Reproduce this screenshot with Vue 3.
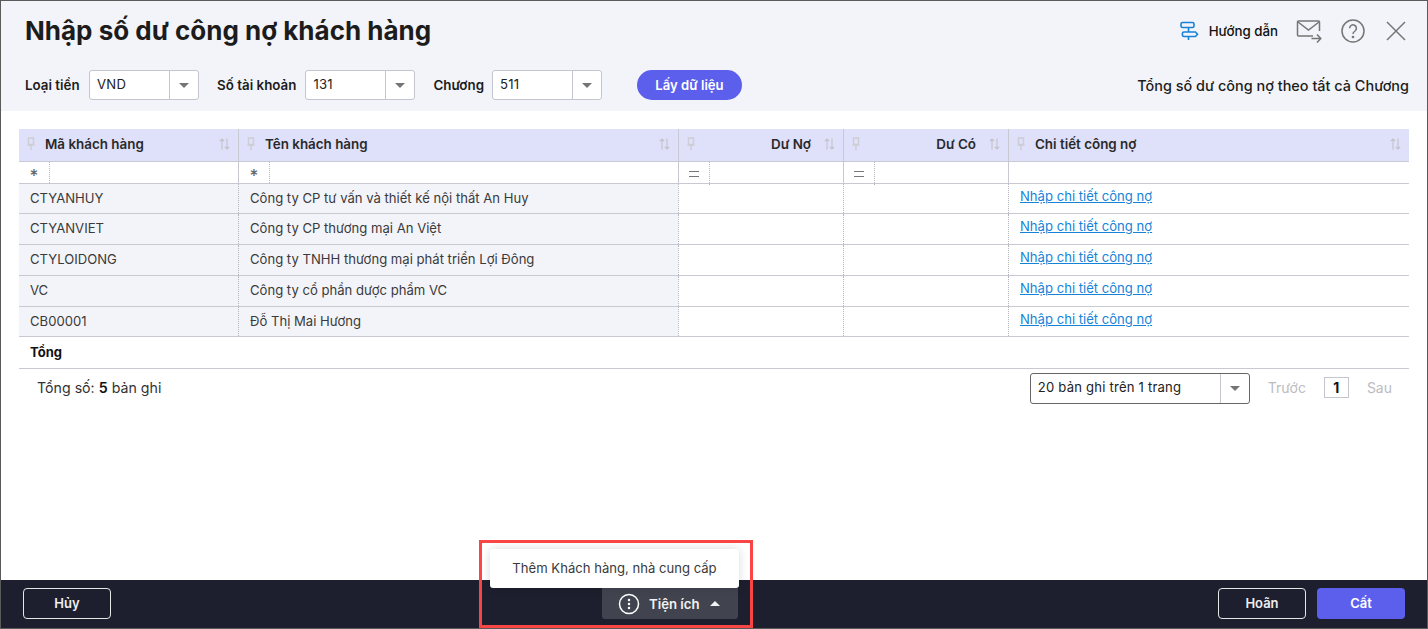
<script setup>
import { ref } from "vue";

const columns = ref([
  { key: "code", label: "Mã khách hàng", op: "*" },
  { key: "name", label: "Tên khách hàng", op: "*" },
  { key: "debit", label: "Dư Nợ", op: "=", right: true },
  { key: "credit", label: "Dư Có", op: "=", right: true },
  { key: "detail", label: "Chi tiết công nợ", op: "" },
]);

const rows = ref([
  { code: "CTYANHUY", name: "Công ty CP tư vấn và thiết kế nội thất An Huy", h: 30 },
  { code: "CTYANVIET", name: "Công ty CP thương mại An Việt", h: 31 },
  { code: "CTYLOIDONG", name: "Công ty TNHH thương mại phát triển Lợi Đông", h: 31 },
  { code: "VC", name: "Công ty cổ phần dược phẩm VC", h: 31 },
  { code: "CB00001", name: "Đỗ Thị Mai Hương", h: 30 },
]);

const filters = ref([
  { label: "Loại tiền", value: "VND" },
  { label: "Số tài khoản", value: "131" },
  { label: "Chương", value: "511" },
]);
</script>

<template>
  <div class="page">
    <header class="head">
      <div class="title-row">
        <h1>Nhập số dư công nợ khách hàng</h1>
        <div class="tools">
          <svg class="guide-icon" width="20" height="20" viewBox="0 0 20 20" fill="none" stroke="#1683d8" stroke-width="1.6">
            <rect x="2" y="1.5" width="13" height="5" rx="1.6" />
            <path d="M5 11h11.5l2 2.2-2 2.3H5a1.6 1.6 0 0 1-1.6-1.6v-1.3A1.6 1.6 0 0 1 5 11z" />
            <path d="M9.5 6.5V11M9.5 15.5V19" />
          </svg>
          <span class="guide">Hướng dẫn</span>
          <svg width="26" height="24" viewBox="0 0 26 24" fill="none" stroke="#757575" stroke-width="1.5">
            <path d="M17 17H2.5a1 1 0 0 1-1-1V3a1 1 0 0 1 1-1h20a1 1 0 0 1 1 1v9" />
            <path d="M2 3l10.5 8L23 3" />
            <path d="M15.5 19.5h9M21 15.5l3.8 4-3.8 4" />
          </svg>
          <svg width="24" height="24" viewBox="0 0 24 24" fill="none" stroke="#757575" stroke-width="1.5">
            <circle cx="12" cy="12" r="11" />
            <path d="M8.6 9.2a3.4 3.4 0 1 1 5.4 2.8c-1.3.9-2 1.5-2 3" />
            <circle cx="12" cy="18" r=".6" fill="#757575" />
          </svg>
          <svg width="20" height="20" viewBox="0 0 20 20" fill="none" stroke="#757575" stroke-width="1.5">
            <path d="M1 1l18 18M19 1L1 19" />
          </svg>
        </div>
      </div>
      <div class="filter-row">
        <div v-for="f in filters" :key="f.label" class="filter">
          <label>{{ f.label }}</label>
          <div class="combo">
            <span class="combo-value">{{ f.value }}</span>
            <span class="combo-arrow"><i></i></span>
          </div>
        </div>
        <button class="fetch">Lấy dữ liệu</button>
        <span class="all-note">Tổng số dư công nợ theo tất cả Chương</span>
      </div>
    </header>

    <main class="body">
      <div class="grid">
        <div class="tr th">
          <div v-for="c in columns" :key="c.key" class="cell" :class="{ right: c.right }">
            <svg class="pin" width="8" height="14" viewBox="0 0 8 14" fill="none" stroke="#cdcdd3" stroke-width="1.4">
              <path d="M1.5 1h5v6.5h-5zM.5 8h7M4 8v5" />
            </svg>
            <span class="th-label">{{ c.label }}</span>
            <svg class="sort" width="11" height="12" viewBox="0 0 11 12" fill="none" stroke="#c2c2c9" stroke-width="1.1">
              <path d="M3 11.5V1M.8 3.2 3 1l2.2 2.2M8 .5V11M5.8 8.8 8 11l2.2-2.2" />
            </svg>
          </div>
        </div>
        <div class="tr filters">
          <div v-for="c in columns" :key="c.key" class="cell">
            <template v-if="c.op">
              <span class="op" :class="{ star: c.op === '*' }">{{ c.op === "*" ? "*" : "" }}<i v-if="c.op === '='"></i></span>
            </template>
          </div>
        </div>
        <div v-for="r in rows" :key="r.code" class="tr row" :style="{ height: r.h + 'px' }">
          <div class="cell shade">{{ r.code }}</div>
          <div class="cell shade">{{ r.name }}</div>
          <div class="cell"></div>
          <div class="cell"></div>
          <div class="cell"><a class="link">Nhập chi tiết công nợ</a></div>
        </div>
        <div class="total">Tổng</div>
      </div>

      <div class="pager">
        <span class="count">Tổng số: <b>5</b> bản ghi</span>
        <div class="page-size">
          <span class="combo-value">20 bản ghi trên 1 trang</span>
          <span class="combo-arrow"><i></i></span>
        </div>
        <span class="nav prev">Trước</span>
        <span class="current">1</span>
        <span class="nav">Sau</span>
      </div>
    </main>

    <footer class="foot">
      <button class="btn ghost">Hủy</button>
      <button class="util">
        <svg width="22" height="22" viewBox="0 0 22 22" fill="none" stroke="#fff" stroke-width="1.5">
          <circle cx="11" cy="11" r="9.5" />
          <circle cx="11" cy="7" r=".5" fill="#fff" />
          <circle cx="11" cy="11" r=".5" fill="#fff" />
          <circle cx="11" cy="15" r=".5" fill="#fff" />
        </svg>
        <span>Tiện ích</span>
        <i class="up"></i>
      </button>
      <div class="foot-right">
        <button class="btn ghost">Hoãn</button>
        <button class="btn save">Cất</button>
      </div>
    </footer>

    <div class="menu">Thêm Khách hàng, nhà cung cấp</div>
    <div class="mark"></div>
  </div>
</template>

<style>
html, body {
  margin: 0;
  background: #fff;
}
</style>

<style scoped>
.page {
  position: relative;
  box-sizing: border-box;
  width: 1428px;
  height: 629px;
  display: flex;
  flex-direction: column;
  border: 1px solid #5a5a5a;
  font-family: Inter, "Noto Sans", sans-serif;
  font-size: 13.1px;
  color: #212121;
  overflow: hidden;
}
.head {
  height: 110px;
  flex: none;
  background: #f3f4f9;
  box-sizing: border-box;
  padding: 0 18px 0 24px;
}
.title-row {
  height: 69px;
  display: flex;
  align-items: center;
  justify-content: space-between;
}
h1 {
  margin: 0 0 10px;
  font-size: 26px;
  font-weight: 700;
  color: #1c1c1c;
}
.tools {
  display: flex;
  align-items: center;
  margin: 0 1px 9px 0;
}
.guide {
  margin: 0 18px 0 10px;
  font-size: 13.3px;
  font-weight: 500;
  color: #111;
}
.tools svg:nth-of-type(2) {
  margin-right: 19px;
}
.tools svg:nth-of-type(3) {
  margin-right: 21px;
}
.tools svg:nth-of-type(4) {
  margin-right: 2px;
}
.filter-row {
  display: flex;
  align-items: center;
  height: 30px;
}
.filter {
  display: flex;
  align-items: center;
  margin-right: 18px;
}
.filter label {
  margin-right: 9px;
  font-size: 13.35px;
  font-weight: 600;
  color: #1c1c1c;
}
.filter:first-child label {
  margin-right: 9.5px;
}
.filter:nth-child(3) label {
  margin-right: 8px;
}
.combo {
  box-sizing: border-box;
  display: flex;
  width: 110px;
  height: 30px;
  background: #fff;
  border: 1px solid #c4c6cf;
  border-radius: 3px;
}
.combo-value {
  flex: 1;
  padding-left: 7px;
  line-height: 26px;
  letter-spacing: 0.2px;
}
.combo-arrow {
  width: 28px;
  display: flex;
  align-items: center;
  justify-content: center;
  border-left: 1px solid #c4c6cf;
}
.combo-arrow i {
  width: 0;
  height: 0;
  border-left: 5px solid transparent;
  border-right: 5px solid transparent;
  border-top: 5px solid #757575;
}
.fetch {
  width: 105px;
  height: 30px;
  margin-left: 17px;
  border: none;
  border-radius: 15px;
  background: #5b5fec;
  color: #fff;
  font: 600 13.1px Inter, sans-serif;
}
.all-note {
  margin-left: auto;
  font-size: 14.45px;
  font-weight: 500;
  color: #1c1c1c;
}
.body {
  flex: 1;
  padding: 18px 18px 0;
}
.tr {
  display: grid;
  grid-template-columns: 219px 440px 165px 165px 401px;
  border-bottom: 1px solid #c8c9d2;
}
.th {
  height: 33px;
  box-sizing: border-box;
  background: #dfe0fa;
}
.th .cell {
  display: flex;
  align-items: center;
  padding: 0 8px 2px 8px;
  border-left: 1px solid #c8c9d2;
  font-size: 13.4px;
  font-weight: 600;
  color: #2a2a2a;
}
.th .cell:first-child {
  border-left: none;
}
.th-label {
  flex: 1;
  margin-left: 10px;
}
.th .right .th-label {
  text-align: right;
  margin-right: 13px;
}
.filters {
  height: 22px;
  box-sizing: border-box;
}
.filters .cell {
  border-left: 1px solid #c8c9d2;
  display: flex;
}
.filters .cell:first-child {
  border-left: none;
}
.op {
  box-sizing: border-box;
  width: 31px;
  height: 100%;
  border-right: 1px dotted #b5b5bd;
  display: flex;
  align-items: center;
  justify-content: center;
  color: #666;
  font-size: 17px;
  font-weight: 500;
  padding-top: 6px;
  line-height: 1;
}
.op i {
  display: block;
  width: 10px;
  height: 4px;
  margin-top: -6px;
  border-top: 1px solid #777;
  border-bottom: 1px solid #777;
}
.row {
  box-sizing: border-box;
}
.row .cell {
  border-left: 1px dotted #b5b5bd;
  padding: 0 10px 0 11px;
  line-height: 28px;
  color: #3a3a3a;
}
.row .cell:first-child {
  border-left: none;
}
.shade {
  background: #f3f4f9;
}
.link {
  color: #1683d8;
  text-decoration: underline;
  position: relative;
  top: -2px;
}
.total {
  height: 32px;
  box-sizing: border-box;
  padding-left: 11px;
  line-height: 31px;
  font-size: 13px;
  font-weight: 700;
  color: #111;
  border-bottom: 1px solid #c8c9d2;
}
.pager {
  display: flex;
  align-items: center;
  height: 38px;
  padding: 0 17px 0 18px;
  font-size: 14px;
}
.count {
  flex: 1;
  margin-top: -2px;
  font-size: 14.2px;
  color: #333;
}
.count b {
  color: #111;
  font-weight: 600;
}
.page-size {
  box-sizing: border-box;
  display: flex;
  width: 220px;
  height: 31px;
  border: 1px solid #666;
  border-radius: 3px;
  font-size: 13.1px;
  color: #222;
}
.page-size .combo-arrow {
  width: 28px;
  border-left-color: #c4c6cf;
}
.nav {
  margin-top: -2px;
  color: #bcbcc2;
}
.prev {
  margin-left: 18px;
}
.current {
  box-sizing: border-box;
  width: 25px;
  height: 21px;
  margin: -2px 18px 0;
  border: 1px solid #c4c6cf;
  text-align: center;
  line-height: 19px;
  font-weight: 700;
  color: #111;
}
.foot {
  position: relative;
  flex: none;
  height: 48px;
  box-sizing: border-box;
  display: flex;
  align-items: flex-start;
  justify-content: space-between;
  padding: 8px 22px 0;
  background: #1d1f2e;
}
.btn {
  box-sizing: border-box;
  width: 88px;
  height: 31px;
  padding-bottom: 2px;
  border-radius: 4px;
  font: 600 13px Inter, sans-serif;
  color: #eee;
}
.ghost {
  border: 1px solid #e6e6e6;
  background: transparent;
}
.save {
  border: none;
  background: #5b5fec;
  color: #fff;
}
.foot-right {
  display: flex;
  gap: 11px;
}
.util {
  position: absolute;
  left: 601px;
  top: 8px;
  box-sizing: border-box;
  width: 136px;
  height: 31px;
  display: flex;
  align-items: center;
  padding-left: 16px;
  border: none;
  border-radius: 0 0 3px 3px;
  background: #41434f;
  color: #f2f2f2;
  font: 600 13.2px Inter, sans-serif;
}
.util span {
  margin-left: 9px;
}
.up {
  width: 0;
  height: 0;
  margin-left: 10px;
  border-left: 5px solid transparent;
  border-right: 5px solid transparent;
  border-bottom: 5px solid #f2f2f2;
}
.menu {
  position: absolute;
  left: 489px;
  top: 548px;
  box-sizing: border-box;
  width: 249px;
  height: 39px;
  background: #fff;
  border-radius: 3px;
  box-shadow: 0 0 10px rgba(0, 0, 0, 0.15);
  text-align: center;
  line-height: 38px;
  color: #3a3a3a;
}
.mark {
  position: absolute;
  left: 478px;
  top: 539px;
  box-sizing: border-box;
  width: 274px;
  height: 88px;
  border: 3px solid #fa4545;
}
</style>
